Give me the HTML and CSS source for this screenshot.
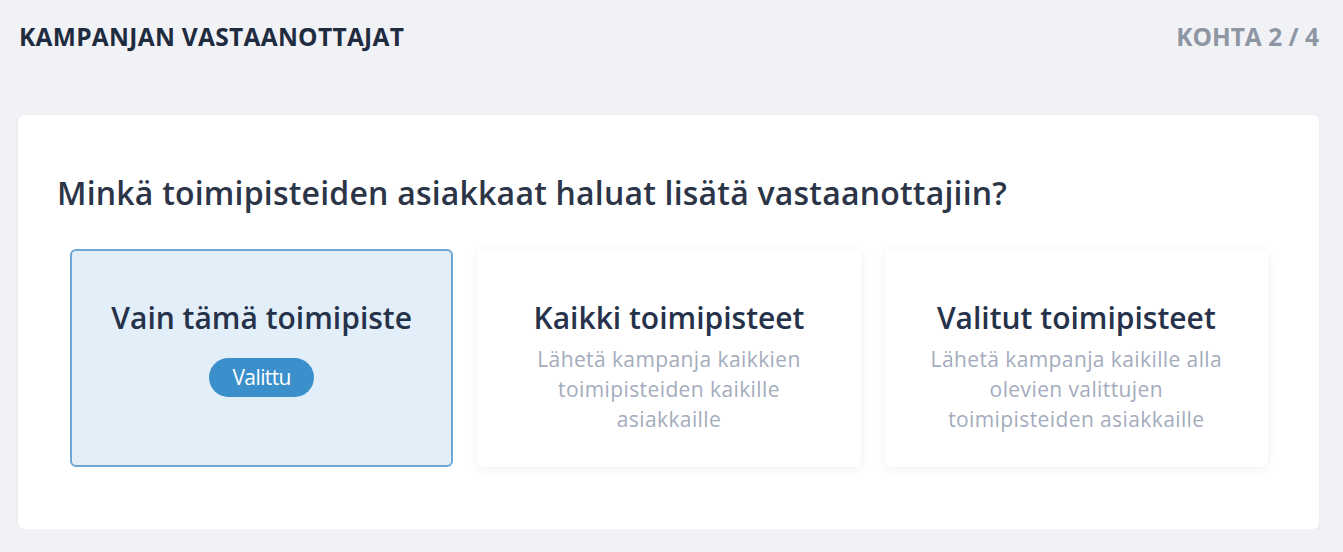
FILE: index.html
```html
<!DOCTYPE html>
<html lang="fi">
  <head>
    <meta charset="UTF-8" />
    <meta name="viewport" content="width=device-width, initial-scale=1.0" />
    <title>Kampanjan vastaanottajat</title>
    <link rel="stylesheet" href="styles.css">
  </head>
  <body>
    <header class="topbar">
      <h2 class="step-title">KAMPANJAN VASTAANOTTAJAT</h2>
      <span class="step-count">KOHTA 2 / 4</span>
    </header>

    <section class="panel">
      <h1 class="question">Minkä toimipisteiden asiakkaat haluat lisätä vastaanottajiin?</h1>

      <div class="options">
        <div class="option selected">
          <h3 class="option-title">Vain tämä toimipiste</h3>
          <span class="badge">Valittu</span>
        </div>
        <div class="option">
          <h3 class="option-title">Kaikki toimipisteet</h3>
          <p class="option-text">Lähetä kampanja kaikkien toimipisteiden kaikille asiakkaille</p>
        </div>
        <div class="option">
          <h3 class="option-title">Valitut toimipisteet</h3>
          <p class="option-text">Lähetä kampanja kaikille alla olevien valittujen toimipisteiden asiakkaille</p>
        </div>
      </div>
    </section>
  </body>
</html>
```

FILE: styles.css
```css
body {
  margin: 0;
  background-color: #f1f2f5;
  font-family: "Open Sans", "Noto Sans", Arial, sans-serif;
  color: #232f45;
}

.topbar {
  display: flex;
  justify-content: space-between;
  align-items: center;
  height: 72px;
  padding: 0 24px 0 19px;
}

.step-title {
  margin: 0;
  font-size: 24.5px;
  font-weight: 700;
  letter-spacing: 0.3px;
  color: #1f2b3f;
}

.step-count {
  font-size: 24.5px;
  font-weight: 700;
  color: #8e96a4;
}

.panel {
  margin: 43px 24px 0 18px;
  background-color: #fff;
  border-radius: 6px;
  box-shadow: 0 1px 4px rgba(30, 40, 60, 0.06);
  padding: 58px 51px 62px 39px;
}

.question {
  margin: 0 0 36px 0;
  font-size: 32px;
  line-height: 40px;
  font-weight: 600;
  letter-spacing: 0.2px;
  color: #2b3547;
}

.options {
  display: grid;
  grid-template-columns: repeat(3, 1fr);
  gap: 24px;
  margin-left: 13px;
}

.option {
  height: 218px;
  box-sizing: border-box;
  display: flex;
  flex-direction: column;
  align-items: center;
  padding: 49px 10px 0;
  background-color: #fff;
  border: 2px solid transparent;
  border-radius: 6px;
  box-shadow: 0 2px 10px rgba(30, 40, 60, 0.07);
  text-align: center;
}

.option.selected {
  background-color: #e2eef8;
  border-color: #6ea6d6;
  box-shadow: none;
}

.option-title {
  margin: 0;
  font-size: 30px;
  line-height: 36px;
  font-weight: 600;
  color: #26324a;
}

.option-text {
  max-width: 305px;
  margin: 8px 0 0;
  font-size: 21px;
  line-height: 30px;
  letter-spacing: 0.4px;
  font-weight: 400;
  color: #a4acbd;
}

.badge {
  margin-top: 22px;
  padding: 0 23px;
  height: 39px;
  line-height: 39px;
  border-radius: 20px;
  background-color: #3b8fcb;
  color: #fff;
  font-size: 21px;
  letter-spacing: -0.6px;
}
```
